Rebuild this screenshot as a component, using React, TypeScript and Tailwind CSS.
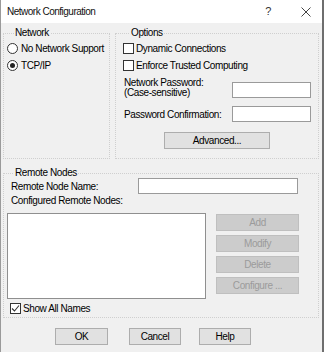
import React from 'react';

function Radio({ checked }: { checked?: boolean }) {
  return (
    <span className="flex items-center justify-center w-[11px] h-[11px] rounded-full border border-[#333333] bg-white shrink-0">
      {checked && <span className="w-[5px] h-[5px] rounded-full bg-[#222222]" />}
    </span>
  );
}

function Check({ checked }: { checked?: boolean }) {
  return (
    <span className="flex items-center justify-center w-[11px] h-[11px] border border-[#333333] bg-white shrink-0">
      {checked && (
        <svg width="9" height="9" viewBox="0 0 9 9">
          <path d="M1 4.5 L3.5 7 L8 1.5" fill="none" stroke="#333333" strokeWidth="1.1" />
        </svg>
      )}
    </span>
  );
}

function Btn({ label, disabled, className }: { label: string; disabled?: boolean; className?: string }) {
  const look = disabled
    ? 'bg-[#cccccc] border-[#bfbfbf] text-[#9b9b9b]'
    : 'bg-[#e1e1e1] border-[#adadad] text-black';
  return (
    <div className={`flex items-center justify-center h-[17px] border ${look} ${className ?? ''}`}>
      {label}
    </div>
  );
}

export default function App() {
  const font = { fontFamily: '"Liberation Sans", Arial, sans-serif' };

  return (
    <div
      style={font}
      className="w-[324px] h-[352px] bg-[#f0f0f0] border-l border-r-2 border-l-[#9a9a9a] border-r-[#6e6e6e] text-[10px] tracking-[-0.4px] text-black overflow-hidden"
    >
      {/* title bar */}
      <div className="flex items-center h-[23px] bg-white pl-[6px] pr-[11px]">
        <span className="text-[10px] tracking-[-0.5px] text-[#111]">Network Configuration</span>
        <span className="ml-auto mr-[30px] text-[11px] text-[#333]">?</span>
        <svg width="10" height="10" viewBox="0 0 10 10">
          <path d="M0.5 0.5 L9.5 9.5 M9.5 0.5 L0.5 9.5" stroke="#444" strokeWidth="1" />
        </svg>
      </div>

      <div className="pl-[2px] pt-[4px]">
        <div className="flex gap-[5px]">
          {/* Network */}
          <fieldset className="w-[107px] h-[132px] border border-dotted border-[#cfcfcf] pl-[3px]">
            <legend className="ml-[7px] px-[1px] leading-[12px]">Network</legend>
            <div className="mt-[1px] flex items-center gap-[3px] h-[17px]">
              <Radio />
              <span>No Network Support</span>
            </div>
            <div className="flex items-center gap-[3px] h-[17px]">
              <Radio checked />
              <span>TCP/IP</span>
            </div>
          </fieldset>

          {/* Options */}
          <fieldset className="w-[204px] h-[132px] border border-dotted border-[#cfcfcf] pl-[7px]">
            <legend className="ml-[7px] px-[1px] leading-[12px]">Options</legend>
            <div className="mt-[1px] flex items-center gap-[2px] h-[17px]">
              <Check />
              <span>Dynamic Connections</span>
            </div>
            <div className="flex items-center gap-[2px] h-[17px]">
              <Check />
              <span>Enforce Trusted Computing</span>
            </div>
            <div className="flex items-start mt-[4px] ml-[1px]">
              <div className="w-[108px] leading-[10px]">
                Network Password:
                <br />
                (Case-sensitive)
              </div>
              <div className="mt-[4px] w-[79px] h-[16px] bg-white border border-[#9a9a9a]" />
            </div>
            <div className="flex items-center mt-[8px] ml-[1px] h-[16px]">
              <div className="w-[108px]">Password Confirmation:</div>
              <div className="w-[79px] h-[16px] bg-white border border-[#9a9a9a]" />
            </div>
            <Btn label="Advanced..." className="mt-[10px] ml-[41px] w-[106px]" />
          </fieldset>
        </div>

        {/* Remote Nodes */}
        <fieldset className="mt-[9px] w-[316px] h-[150px] border border-dotted border-[#cfcfcf] pl-[3px]">
          <legend className="ml-[7px] px-[1px] leading-[10px]">Remote Nodes</legend>
          <div className="flex items-center h-[16px] ml-[4px]">
            <div className="w-[127px]">Remote Node Name:</div>
            <div className="w-[160px] h-[16px] bg-white border border-[#9a9a9a]" />
          </div>
          <div className="mt-[1px] ml-[4px] leading-[12px]">Configured Remote Nodes:</div>
          <div className="mt-[6px] flex items-start">
            <div className="w-[199px] h-[86px] bg-white border border-[#8f8f8f]" />
            <div className="ml-[10px] mt-[1px] w-[83px] flex flex-col gap-[4px]">
              <Btn label="Add" disabled />
              <Btn label="Modify" disabled />
              <Btn label="Delete" disabled />
              <Btn label="Configure ..." disabled />
            </div>
          </div>
          <div className="mt-[2px] ml-[3px] flex items-center gap-[2px] h-[15px]">
            <Check checked />
            <span>Show All Names</span>
          </div>
        </fieldset>

        {/* dialog buttons */}
        <div className="mt-[10px] flex">
          <Btn label="OK" className="ml-[52px] w-[53px]" />
          <Btn label="Cancel" className="ml-[21px] w-[52px]" />
          <Btn label="Help" className="ml-[18px] w-[52px]" />
        </div>
      </div>
    </div>
  );
}
